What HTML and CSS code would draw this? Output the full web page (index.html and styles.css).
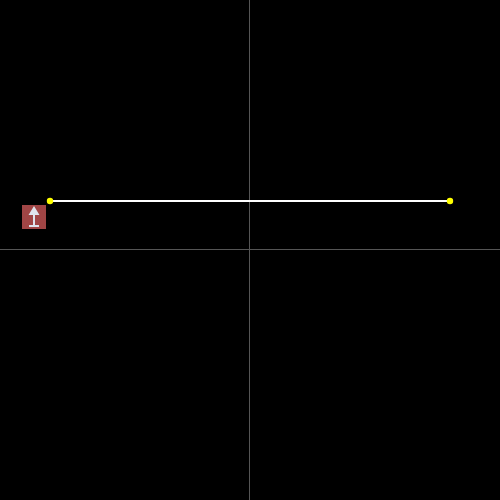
FILE: index.html
```
<!DOCTYPE html>
<html lang="en">
<head>
<meta charset="utf-8">
<title>Plot</title>
<link rel="stylesheet" href="styles.css">
</head>
<body>
<main class="plot">
  <svg class="graph" viewBox="0 0 500 500" aria-hidden="true">
    <path class="axis" d="M249 0h1v500h-1zM0 249h500v1H0z"/>
    <path class="segment" d="M50 200h400v2H50z"/>
    <circle class="point" cx="50" cy="201" r="3.2"/>
    <circle class="point" cx="450" cy="201" r="3.2"/>
  </svg>
  <button class="tool" type="button" aria-label="Move up">
    <svg class="arrow" viewBox="0 0 24 24" aria-hidden="true">
      <path d="M12 1l5.5 9H13v10h4v2H7v-2h4V10H6.500z"/>
    </svg>
  </button>
</main>
</body>
</html>
```

FILE: styles.css
```
body {
  margin: 0;
  background: #000;
}

.plot {
  position: relative;
  min-height: 100vh;
}

.graph {
  display: block;
  width: 100%;
}

.axis {
  fill: #555;
}

.segment {
  fill: #fff;
}

.point {
  fill: #ff0;
}

.tool {
  position: absolute;
  left: 22px;
  top: 205px;
  width: 24px;
  height: 24px;
  padding: 0;
  border: 0;
  background: #a04545;
}

.arrow {
  display: block;
  width: 24px;
  height: 24px;
  fill: #dfe3ec;
}
```
